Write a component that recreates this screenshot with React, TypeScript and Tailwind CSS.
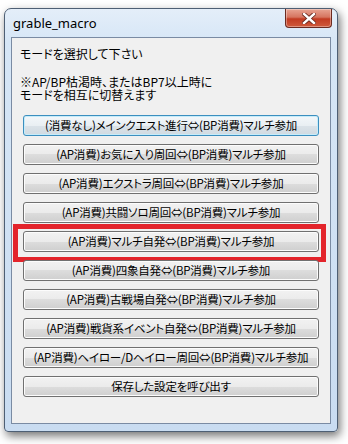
import React from 'react';

const modes = [
  '(消費なし)メインクエスト進行⇔(BP消費)マルチ参加',
  '(AP消費)お気に入り周回⇔(BP消費)マルチ参加',
  '(AP消費)エクストラ周回⇔(BP消費)マルチ参加',
  '(AP消費)共闘ソロ周回⇔(BP消費)マルチ参加',
  '(AP消費)マルチ自発⇔(BP消費)マルチ参加',
  '(AP消費)四象自発⇔(BP消費)マルチ参加',
  '(AP消費)古戦場自発⇔(BP消費)マルチ参加',
  '(AP消費)戦貨系イベント自発⇔(BP消費)マルチ参加',
  '(AP消費)ヘイロー/Dヘイロー周回⇔(BP消費)マルチ参加',
  '保存した設定を呼び出す',
];

function CloseButton() {
  return (
    <div className="w-[47px] h-[19px] rounded-b-[4px] border border-t-0 border-[#6b2a20] bg-[linear-gradient(to_bottom,#e8a493_0%,#d67560_45%,#c23b22_55%,#cf5a3c_100%)] shadow-[inset_0_0_0_1px_rgba(255,255,255,0.35)] flex items-center justify-center">
      <svg width="14" height="11" viewBox="0 0 14 11">
        <path d="M2 1 L12 10 M12 1 L2 10" stroke="#6b2a20" strokeWidth="4.2" strokeLinecap="square" />
        <path d="M2 1 L12 10 M12 1 L2 10" stroke="#ffffff" strokeWidth="2.4" strokeLinecap="square" />
      </svg>
    </div>
  );
}

function ModeButton({ label, isDefault }: { label: string; isDefault?: boolean }) {
  return (
    <button
      className={
        isDefault
          ? 'block w-full h-[21px] rounded-[3px] border border-[#3c8fbf] bg-[linear-gradient(to_bottom,#f3f7fa_0%,#e9eff3_50%,#dbe3e9_50%,#d0dae1_100%)] shadow-[inset_0_0_0_1px_#c6ecfa] text-[11.5px] tracking-[-0.2px] leading-[19px] text-black'
          : 'block w-full h-[21px] rounded-[3px] border border-[#707070] bg-[linear-gradient(to_bottom,#f2f2f2_0%,#ebebeb_50%,#dddddd_50%,#cfcfcf_100%)] shadow-[inset_0_0_0_1px_#fcfcfc] text-[11.5px] tracking-[-0.2px] leading-[19px] text-black'
      }
    >
      {label}
    </button>
  );
}

export default function App() {
  return (
    <div className="w-[348px] h-[444px] bg-white pt-[8px] pl-[4px] [font-family:'Noto_Sans_CJK_JP',sans-serif] [font-feature-settings:'palt'] overflow-hidden">
      <div className="w-[334px] h-[424px] rounded-t-[7px] rounded-b-[4px] border border-[#4e5f74] bg-[linear-gradient(to_bottom,#e4eef9_0%,#d6e6f6_8%,#c9dcf1_100%)] shadow-[2px_4px_10px_rgba(0,0,0,0.55)] flex flex-col px-[6px] pb-[7px]">
        {/* Title bar */}
        <div className="h-[28px] flex items-start justify-between">
          <span className="pl-[2px] pt-[6px] text-[13px] leading-[16px] text-black [font-family:'Noto_Sans',sans-serif]">grable_macro</span>
          <div className="-mr-[1px]">
            <CloseButton />
          </div>
        </div>

        {/* Client area */}
        <div className="flex-1 border border-[#7a8ba3] bg-[#f0f0f0] flex flex-col px-[8px] pt-[9px]">
          <p className="text-[12px] leading-[13px] text-black">モードを選択して下さい</p>
          <div className="mt-[15px] flex flex-col text-[12px] leading-[13px] text-black">
            <span>※AP/BP枯渇時、またはBP7以上時に</span>
            <span>モードを相互に切替えます</span>
          </div>
          <div className="mt-[14px] px-[3px] flex flex-col gap-[8px]">
            {modes.map((m, i) => (
              <div key={m} className="relative">
                <ModeButton label={m} isDefault={i === 0} />
                {i === 4 && (
                  <div className="absolute -left-[10px] -right-[7px] -top-[7px] -bottom-[10px] border-[5px] border-[#e3242b] pointer-events-none" />
                )}
              </div>
            ))}
          </div>
        </div>
      </div>
    </div>
  );
}
